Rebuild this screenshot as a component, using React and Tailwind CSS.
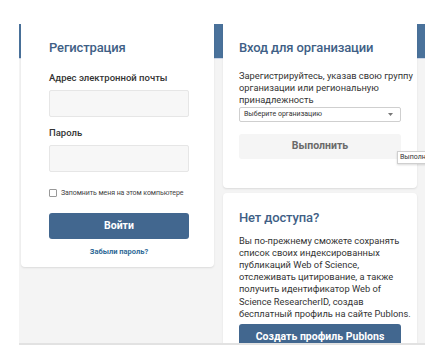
import React from 'react';

const body = "font-['Roboto',sans-serif]";

function LoginCard() {
  return (
    <div className="h-[243px] w-[193px] shrink-0 rounded-b-[4px] bg-white pl-[28px] pr-[25px] pt-[15px] shadow-[0_1px_2px_rgba(0,0,0,0.1)]">
      <h2 className="text-[13px] leading-[18px] font-medium tracking-[-0.01em] text-[#3f5f86]">Регистрация</h2>
      <label className="mt-[14px] block whitespace-nowrap text-[9.5px] leading-[14px] font-medium text-[#333]">Адрес электронной почты</label>
      <div className="mt-[5px] h-[27px] w-full rounded-[2px] border border-[#e6e6e6] bg-[#f7f7f7]" />
      <label className="mt-[9px] block text-[9.5px] leading-[14px] font-medium text-[#333]">Пароль</label>
      <div className="mt-[5px] h-[27px] w-full rounded-[2px] border border-[#e6e6e6] bg-[#f7f7f7]" />
      <div className="mt-[16px] flex h-[10px] items-center gap-[4px]">
        <span className="h-[8px] w-[8px] shrink-0 rounded-[1px] border border-[#999] bg-white" />
        <span className="whitespace-nowrap text-[7px] leading-[10px] tracking-[-0.01em] text-[#444]">Запомнить меня на этом компьютере</span>
      </div>
      <button className="mt-[15px] flex h-[26px] w-full items-center justify-center rounded-[3px] bg-[#42678f] text-[10.5px] font-bold text-white">Войти</button>
      <p className="mt-[8px] text-center text-[7.5px] leading-[10px] font-bold text-[#2f6a97]">Забыли пароль?</p>
    </div>
  );
}

function OrgCard() {
  return (
    <div className="rounded-b-[4px] bg-white px-4 pb-[29px] pt-[15px] shadow-[0_1px_2px_rgba(0,0,0,0.1)]">
      <h2 className="text-[13px] leading-[18px] font-medium tracking-[-0.01em] text-[#3f5f86]">Вход для организации</h2>
      <p className="mt-[13px] whitespace-nowrap text-[9.3px] leading-[12.2px] text-[#333]">
        Зарегистрируйтесь, указав свою группу<br />организации или региональную<br />принадлежность
      </p>
      <div className="flex h-[15px] items-center justify-between rounded-[2px] border border-[#cfcfcf] bg-white pl-[4px] pr-[7px]">
        <span className="text-[7px] leading-[10px] text-[#333]">Выберите организацию</span>
        <svg width="5" height="3" viewBox="0 0 5 3"><polygon points="0,0 5,0 2.5,3" fill="#777" /></svg>
      </div>
      <div className="relative mt-[12px]">
        <button className="flex h-[25px] w-full items-center justify-center rounded-[3px] bg-[#f5f5f5] text-[10.5px] font-bold text-[#6a6a6a]">Выполнить</button>
        <div className="absolute left-[158px] top-[17px] h-[13px] whitespace-nowrap border border-[#cfcfcf] bg-white px-[2px] text-[7px] leading-[11px] text-[#333] shadow-[0_1px_2px_rgba(0,0,0,0.15)]">Выполнить</div>
      </div>
    </div>
  );
}

function NoAccessCard() {
  return (
    <div className="mt-[5px] rounded-[4px] bg-white px-4 pb-4 pt-[16px] shadow-[0_1px_2px_rgba(0,0,0,0.1)]">
      <h2 className="text-[13px] leading-[18px] font-medium tracking-[-0.01em] text-[#3f5f86]">Нет доступа?</h2>
      <p className="mt-[8px] whitespace-nowrap text-[9.3px] leading-[12.2px] text-[#333]">
        Вы по-прежнему сможете сохранять<br />
        список своих индексированных<br />
        публикаций Web of Science,<br />
        отслеживать цитирование, а также<br />
        получить идентификатор Web of<br />
        Science ResearcherID, создав<br />
        бесплатный профиль на сайте Publons.
      </p>
      <button className="mt-[4px] flex h-[26px] w-full items-center justify-center rounded-[3px] bg-[#42678f] text-[10.5px] font-bold text-white">Создать профиль Publons</button>
    </div>
  );
}

export default function App() {
  return (
    <div className={`h-[363px] w-[443px] bg-white pl-[19px] pt-6 ${body}`}>
      <div className="h-[321px] w-[406px] overflow-hidden border-b-2 border-[#e2e2e2] bg-[#f4f4f4] bg-[linear-gradient(#4a729b_0_34px,#cdd6e8_34px_35px,#f4f4f4_35px)] pl-[2px] pr-[8px]">
        <div className="flex items-start gap-[9px]">
          <LoginCard />
          <div className="w-[194px] shrink-0">
            <OrgCard />
            <NoAccessCard />
          </div>
        </div>
      </div>
    </div>
  );
}
